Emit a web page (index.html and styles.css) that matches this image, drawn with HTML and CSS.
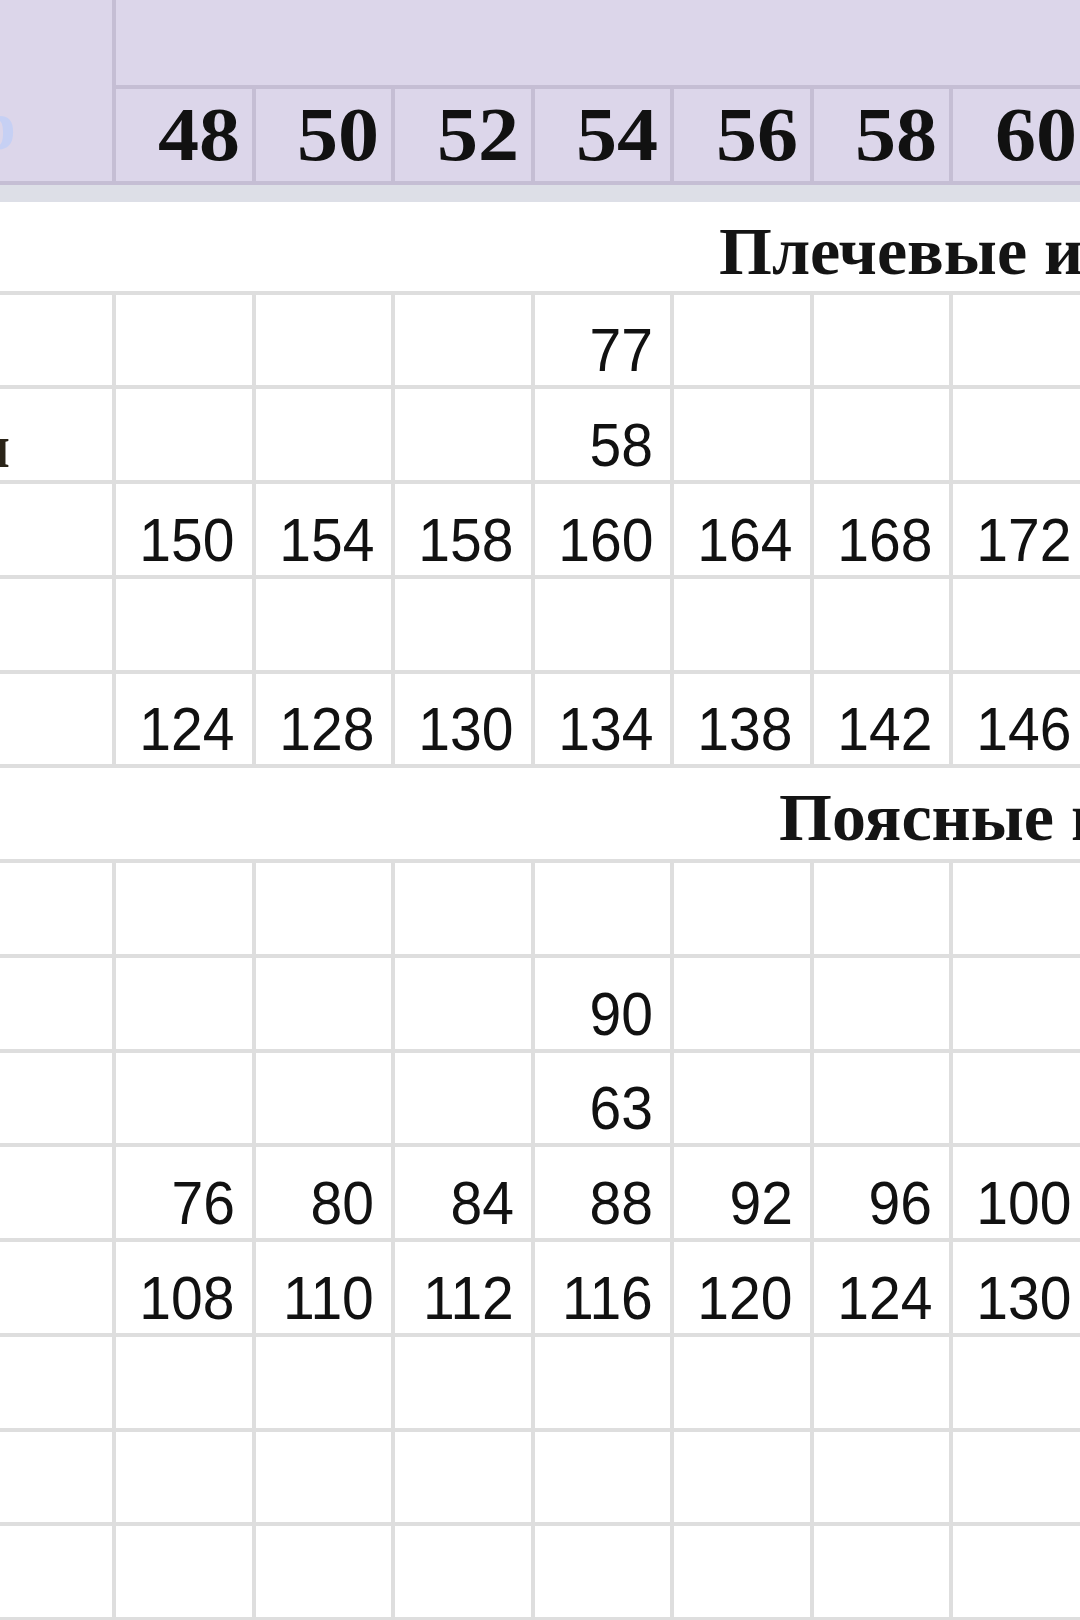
FILE: index.html
```html
<!DOCTYPE html>
<html lang="ru">
<head>
<meta charset="utf-8">
<title>Таблица размеров</title>
<link rel="stylesheet" href="styles.css">
</head>
<body>
<div class="sheet">
  <div class="head">
    <div class="head-label"><span>Размер</span></div>
    <div class="head-top"></div>
    <div class="size"><span>48</span></div>
    <div class="size"><span>50</span></div>
    <div class="size"><span>52</span></div>
    <div class="size"><span>54</span></div>
    <div class="size"><span>56</span></div>
    <div class="size"><span>58</span></div>
    <div class="size"><span>60</span></div>
    <div class="size"><span>62</span></div>
  </div>
  <div class="band"></div>
  <div class="body">
    <div class="section section-shoulder">Плечевые изделия</div>

    <div class="row">
      <div class="label"></div>
      <div class="cell"></div><div class="cell"></div><div class="cell"></div>
      <div class="cell"><span>77</span></div>
      <div class="cell"></div><div class="cell"></div><div class="cell"></div><div class="cell"></div>
    </div>
    <div class="row">
      <div class="label"><span>Длина спинки</span></div>
      <div class="cell"></div><div class="cell"></div><div class="cell"></div>
      <div class="cell"><span>58</span></div>
      <div class="cell"></div><div class="cell"></div><div class="cell"></div><div class="cell"></div>
    </div>
    <div class="row">
      <div class="label"></div>
      <div class="cell"><span>150</span></div>
      <div class="cell"><span>154</span></div>
      <div class="cell"><span>158</span></div>
      <div class="cell"><span>160</span></div>
      <div class="cell"><span>164</span></div>
      <div class="cell"><span>168</span></div>
      <div class="cell"><span>172</span></div>
      <div class="cell"><span>176</span></div>
    </div>
    <div class="row">
      <div class="label"></div>
      <div class="cell"></div><div class="cell"></div><div class="cell"></div><div class="cell"></div>
      <div class="cell"></div><div class="cell"></div><div class="cell"></div><div class="cell"></div>
    </div>
    <div class="row">
      <div class="label"></div>
      <div class="cell"><span>124</span></div>
      <div class="cell"><span>128</span></div>
      <div class="cell"><span>130</span></div>
      <div class="cell"><span>134</span></div>
      <div class="cell"><span>138</span></div>
      <div class="cell"><span>142</span></div>
      <div class="cell"><span>146</span></div>
      <div class="cell"><span>150</span></div>
    </div>

    <div class="section section-waist">Поясные изделия</div>

    <div class="row">
      <div class="label"></div>
      <div class="cell"></div><div class="cell"></div><div class="cell"></div><div class="cell"></div>
      <div class="cell"></div><div class="cell"></div><div class="cell"></div><div class="cell"></div>
    </div>
    <div class="row">
      <div class="label"></div>
      <div class="cell"></div><div class="cell"></div><div class="cell"></div>
      <div class="cell"><span>90</span></div>
      <div class="cell"></div><div class="cell"></div><div class="cell"></div><div class="cell"></div>
    </div>
    <div class="row">
      <div class="label"></div>
      <div class="cell"></div><div class="cell"></div><div class="cell"></div>
      <div class="cell"><span>63</span></div>
      <div class="cell"></div><div class="cell"></div><div class="cell"></div><div class="cell"></div>
    </div>
    <div class="row">
      <div class="label"></div>
      <div class="cell"><span>76</span></div>
      <div class="cell"><span>80</span></div>
      <div class="cell"><span>84</span></div>
      <div class="cell"><span>88</span></div>
      <div class="cell"><span>92</span></div>
      <div class="cell"><span>96</span></div>
      <div class="cell"><span>100</span></div>
      <div class="cell"><span>104</span></div>
    </div>
    <div class="row">
      <div class="label"></div>
      <div class="cell"><span>108</span></div>
      <div class="cell"><span>110</span></div>
      <div class="cell"><span>112</span></div>
      <div class="cell"><span>116</span></div>
      <div class="cell"><span>120</span></div>
      <div class="cell"><span>124</span></div>
      <div class="cell"><span>130</span></div>
      <div class="cell"><span>134</span></div>
    </div>
    <div class="row">
      <div class="label"></div>
      <div class="cell"></div><div class="cell"></div><div class="cell"></div><div class="cell"></div>
      <div class="cell"></div><div class="cell"></div><div class="cell"></div><div class="cell"></div>
    </div>
    <div class="row">
      <div class="label"></div>
      <div class="cell"></div><div class="cell"></div><div class="cell"></div><div class="cell"></div>
      <div class="cell"></div><div class="cell"></div><div class="cell"></div><div class="cell"></div>
    </div>
    <div class="row">
      <div class="label"></div>
      <div class="cell"></div><div class="cell"></div><div class="cell"></div><div class="cell"></div>
      <div class="cell"></div><div class="cell"></div><div class="cell"></div><div class="cell"></div>
    </div>
  </div>
</div>
</body>
</html>
```

FILE: styles.css
```css
html, body {
  margin: 0;
  padding: 0;
  background: #ffffff;
}

body {
  width: 1080px;
  height: 1620px;
  overflow: hidden;
  color: #111111;
  font-family: "Liberation Sans", Arial, sans-serif;
}

.sheet {
  width: 1228px;
}

/* ---------- header ---------- */
.head {
  display: grid;
  grid-template-columns: 112px repeat(8, 135.5px);
  grid-template-rows: 85px 92px;
  gap: 4px;
  padding-bottom: 4px;
  background: #c5bed4;
}

.head-label {
  grid-row: 1 / 3;
  background: #dcd6ea;
  overflow: hidden;
  display: flex;
  justify-content: flex-end;
  align-items: flex-end;
  padding: 0 96px 20px 0;
  white-space: nowrap;
  font-family: "Liberation Serif", "Times New Roman", serif;
  font-weight: bold;
  font-size: 70px;
  line-height: 1;
  color: #c6d0f4;
}

.head-top {
  grid-column: 2 / -1;
  background: #dcd6ea;
}

.size {
  background: #dcd6ea;
  display: flex;
  justify-content: flex-end;
  align-items: flex-end;
  padding: 0 12px 9px 0;
  font-family: "Liberation Serif", "Times New Roman", serif;
  font-weight: bold;
  font-size: 76px;
  line-height: 1;
  color: #111111;
}

.size span {
  display: inline-block;
  transform: scaleX(1.08);
  transform-origin: right bottom;
}

.band {
  height: 17px;
  background: #dddfe7;
}

/* ---------- body ---------- */
.body {
  display: grid;
  row-gap: 4px;
  padding-bottom: 4px;
  background: #dedede;
}

.section {
  height: 88.5px;
  background: #ffffff;
  display: flex;
  align-items: flex-end;
  padding-bottom: 6px;
  box-sizing: border-box;
  white-space: nowrap;
  font-family: "Liberation Serif", "Times New Roman", serif;
  font-weight: bold;
  font-size: 68px;
  line-height: 1;
  color: #141414;
}

.section-shoulder {
  padding-left: 719px;
}

.section-waist {
  height: 90.75px;
  padding-left: 779px;
  padding-bottom: 8px;
}

.row {
  display: grid;
  grid-template-columns: 112px repeat(8, 135.5px);
  column-gap: 4px;
  height: 90.75px;
}

.label {
  background: #ffffff;
  overflow: hidden;
  display: flex;
  justify-content: flex-end;
  align-items: flex-end;
  padding: 0 102px 3px 0;
  white-space: nowrap;
  font-family: "Liberation Serif", "Times New Roman", serif;
  font-weight: bold;
  font-size: 62px;
  line-height: 1;
  color: #2a2418;
}

.cell {
  background: #ffffff;
  display: flex;
  justify-content: flex-end;
  align-items: flex-end;
  padding: 0 17px 4px 0;
  font-size: 62px;
  line-height: 1;
  color: #111111;
}

.cell span {
  display: inline-block;
  transform: scaleX(0.92);
  transform-origin: right bottom;
}
```
